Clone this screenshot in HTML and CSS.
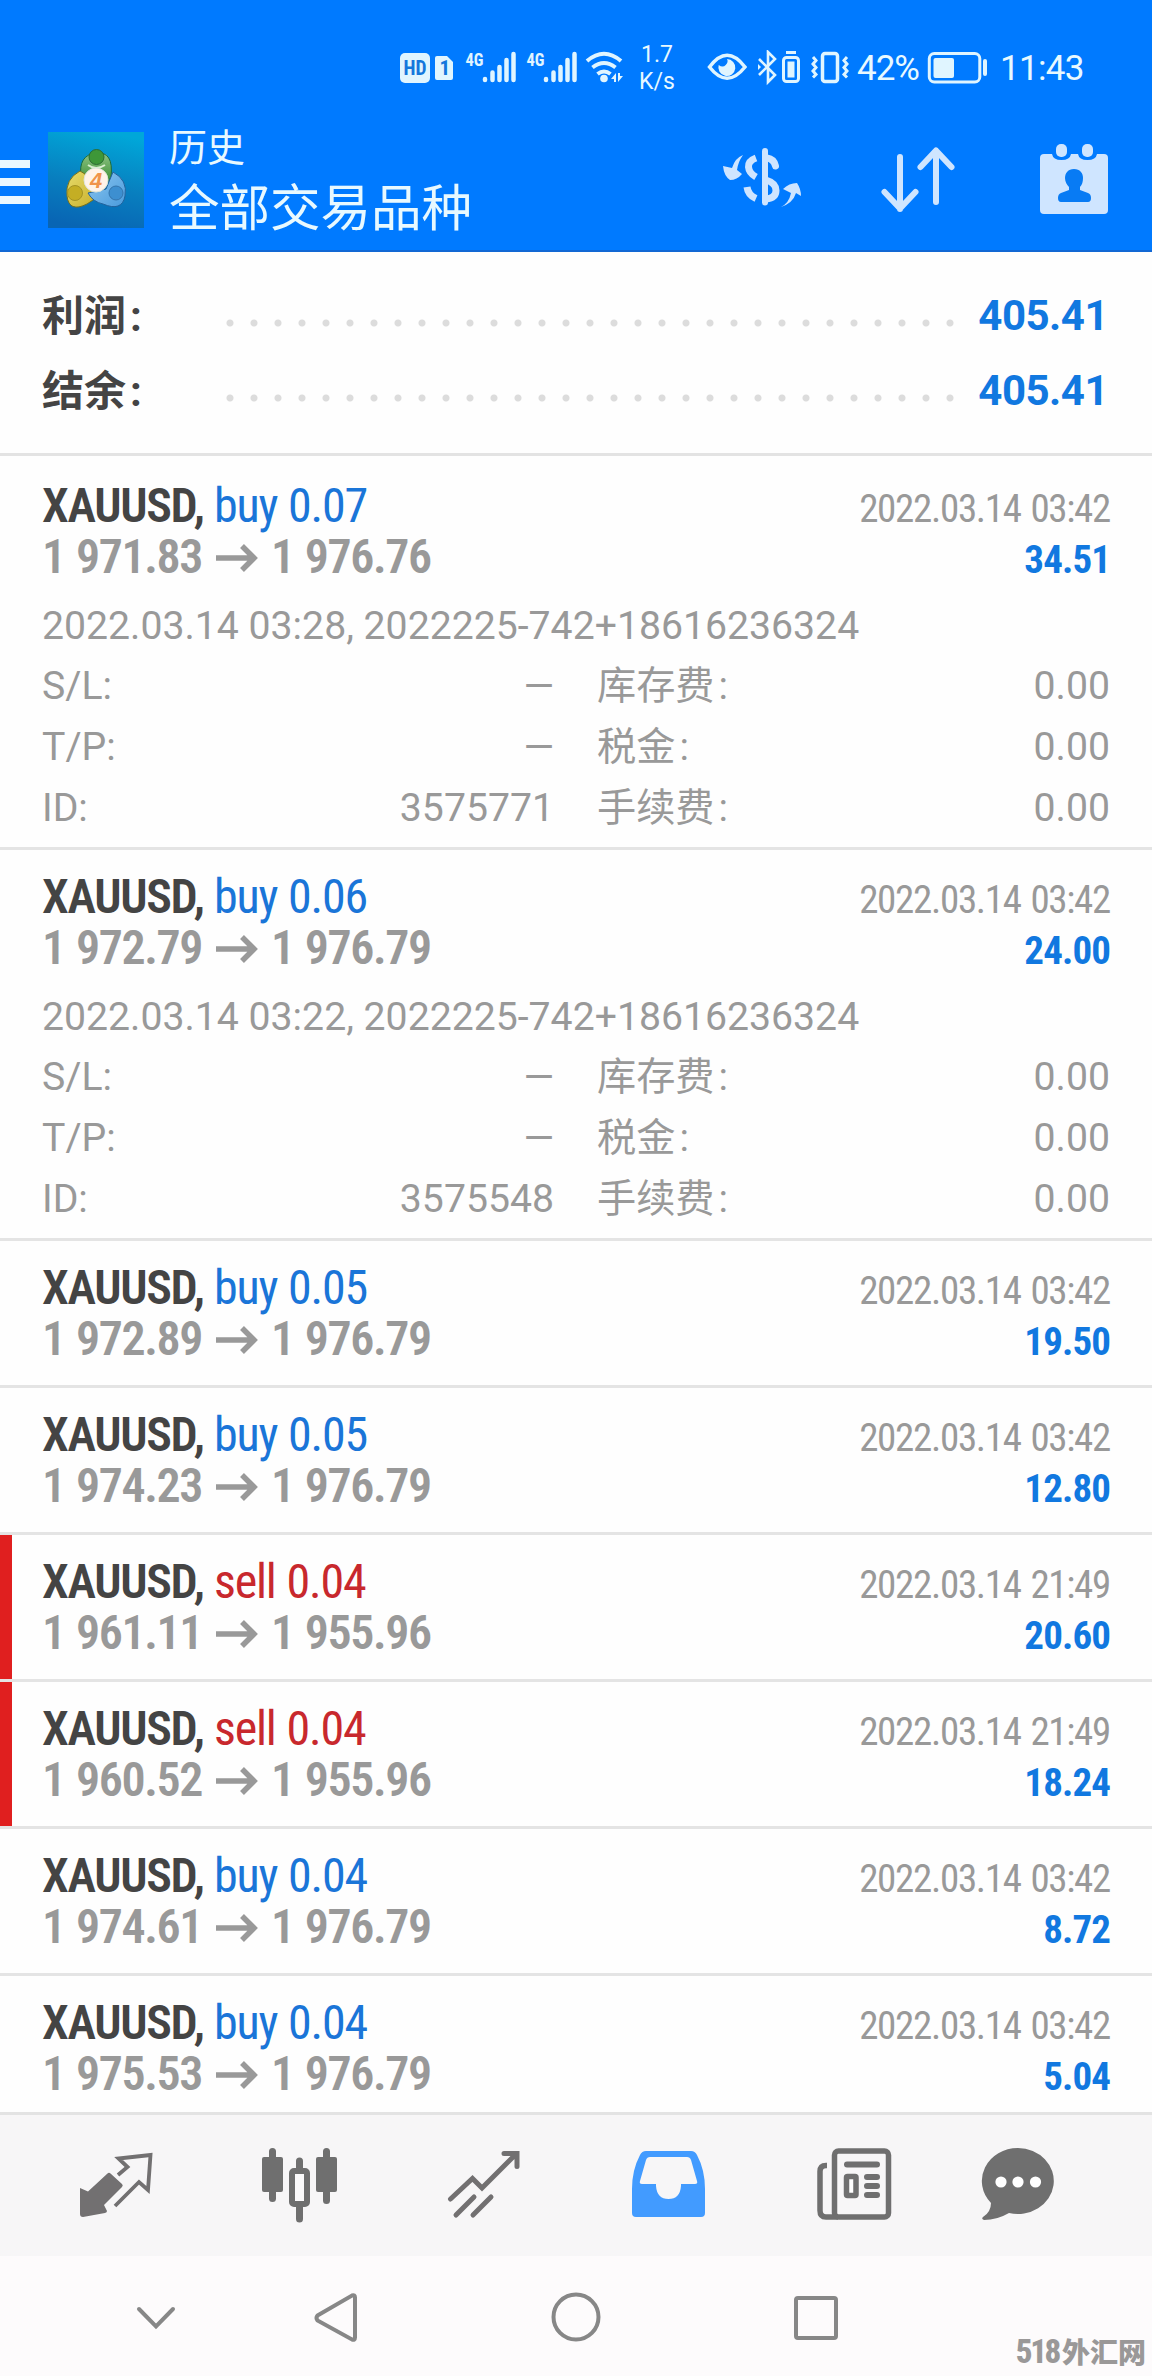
FILE: index.html
```html
<!DOCTYPE html>
<html lang="zh-CN">
<head>
<meta charset="utf-8">
<title>历史</title>
<link rel="stylesheet" href="styles.css">
</head>
<body>
<div class="screen">
  <header class="header">
    <div class="status">
      <svg width="62" height="36" viewBox="398 50 62 36">
        <rect x="400" y="53" width="30" height="30" rx="5" fill="#e0f5ff"/>
        <text x="403.500" y="75" class="svg-hd" textLength="23" lengthAdjust="spacingAndGlyphs">HD</text>
        <path d="M437 56h10l6 6v16q0 2-2 2h-14q-2 0-2-2V58q0-2 2-2z" fill="#e0f5ff"/>
        <text x="439.500" y="75" class="svg-hd">1</text>
      </svg>
      <svg class="signal" width="60" height="46" viewBox="460 40 60 46">
        <text x="465.500" y="66" class="svg-4g" textLength="18" lengthAdjust="spacingAndGlyphs">4G</text>
        <path d="M485 79v1M492.500 72.500v7.500M499.500 67v13M506.500 60v20M513.500 54v26" class="bars"/>
      </svg>
      <svg class="signal" width="60" height="46" viewBox="459 40 60 46">
        <text x="465.500" y="66" class="svg-4g" textLength="18" lengthAdjust="spacingAndGlyphs">4G</text>
        <path d="M485 79v1M492.500 72.500v7.500M499.500 67v13M506.500 60v20M513.500 54v26" class="bars"/>
      </svg>
      <svg width="52" height="36" viewBox="580 50 52 36">
        <g fill="none" stroke="#e0f5ff" stroke-width="4"><path d="M587 61q17-14.500 34 0M592.500 67.500q11.500-9 23 0M597.500 74q6.500-5 13 0"/></g>
        <circle cx="604" cy="78.500" r="3.800" fill="#e0f5ff"/>
        <path d="M611 79l5-6v9h-2v-3zM623 76l-5 6v-9h2v3z" fill="#e0f5ff"/>
      </svg>
      <div class="speed"><span>1.7</span><span>K/s</span></div>
      <svg width="70" height="36" viewBox="682 50 70 36">
        <path d="M709.500 67q17.500-23.500 35.500 0q-18 22.500-35.500 0z" fill="none" stroke="#e0f5ff" stroke-width="3.500"/>
        <path d="M727 59a8.500 8.500 0 1 1-8.300 6q4 3 7 0t1.300-6z" fill="#e0f5ff"/>
      </svg>
      <svg width="54" height="36" viewBox="752 50 54 36">
        <path d="M759 59l16 16-7 7V52l7 7-16 16" fill="none" stroke="#e0f5ff" stroke-width="2.600"/>
        <path d="M758 64l3 3-3 3z" fill="#e0f5ff"/>
        <rect x="783.500" y="57.500" width="15" height="24" rx="3" fill="none" stroke="#e0f5ff" stroke-width="3"/>
        <path d="M786 52.500h10" stroke="#e0f5ff" stroke-width="3"/><path d="M787.500 61.500h7v16h-7z" fill="#e0f5ff"/>
      </svg>
      <svg width="48" height="36" viewBox="806 50 48 36">
        <g fill="none" stroke="#e0f5ff" stroke-width="3.500"><rect x="822.500" y="53.500" width="15" height="28" rx="2.500"/><path d="M813 57l3 3.500-3 3.500 3 3.500-3 3.500 3 3.500-3 3M847 57l-3 3.500 3 3.500-3 3.500 3 3.500-3 3.500 3 3" stroke-width="3"/></g>
      </svg>
      <span class="pct">42%</span>
      <svg width="70" height="36" viewBox="924 50 70 36">
        <rect x="929.300" y="53.500" width="50.500" height="28.500" rx="5" fill="none" stroke="#e0f5ff" stroke-width="3"/>
        <rect x="933.500" y="58" width="20.500" height="20" rx="2" fill="#e0f5ff"/><path d="M985 61v13" stroke="#e0f5ff" stroke-width="4" stroke-linecap="round"/>
      </svg>
      <span class="clock">11:43</span>
    </div>
    <div class="appbar">
      <svg class="burger" width="30" height="44" viewBox="0 0 30 44"><path d="M0 0h30v8H0zM0 18h30v8H0zM0 36h30v8H0z" fill="#eaf8ff"/></svg>
      <svg class="logo" width="96" height="96" viewBox="0 0 96 96">
        <defs>
          <linearGradient id="sky" x1="0.600" y1="0" x2="0.400" y2="1"><stop offset="0" stop-color="#00a7d9"/><stop offset=".55" stop-color="#087fbf"/><stop offset="1" stop-color="#0865b4"/></linearGradient>
          <linearGradient id="green" x1="0" y1="0" x2="0" y2="1"><stop offset="0" stop-color="#8fc486"/><stop offset="1" stop-color="#398d31"/></linearGradient>
          <linearGradient id="gold" x1="0" y1="0" x2="1" y2="1"><stop offset="0" stop-color="#e6dc6c"/><stop offset="1" stop-color="#c9ae28"/></linearGradient>
          <linearGradient id="blue" x1="0" y1="0" x2="1" y2="1"><stop offset="0" stop-color="#8cc6f0"/><stop offset="1" stop-color="#4a9bdc"/></linearGradient>
        </defs>
        <rect width="96" height="96" fill="url(#sky)"/>
        <path d="M33 45q-3-22 15-24t15 24l-4 6H37z" fill="url(#green)" stroke="#1b6b3c"/>
        <path d="M32 39q-15 8-13 25t20 8l12-8-14-22z" fill="url(#gold)" stroke="#77711c"/>
        <path d="M65 40q15 8 12 24t-22 8q-10-2-15-11l18-4z" fill="url(#blue)" stroke="#22629c"/>
        <circle cx="48.500" cy="25" r="7.500" fill="#3e9738" stroke="#2b6c32"/><circle cx="27" cy="61" r="7.500" fill="#c4ae24" stroke="#a49323"/><circle cx="68" cy="61" r="7" fill="#3d8fd0" stroke="#3475ad"/>
        <path d="M40 33q8 6 17 0" stroke="#d8efd0" stroke-width="2" fill="none"/>
        <circle cx="48" cy="48" r="12" fill="#fff3e8" stroke="#dce4da"/>
        <text x="42" y="56" class="svg-four">4</text>
      </svg>
      <div class="titles"><div class="sub">历史</div><div class="main">全部交易品种</div></div>
      <div class="actions">
        <svg width="80" height="64" viewBox="722 146 80 64">
          <g fill="none" stroke="#cfe5ff" stroke-width="7"><path d="M756 158q-8 3-7.500 9t7.500 10M747 187q1 8 9 11.500"/><path d="M765 151v51.500" stroke-width="6" stroke-linecap="round"/><path d="M767 158q7 1 8.500 8" stroke-linecap="round"/><path d="M766 180q10 3 10 10.500t-10 8.500"/></g>
          <path d="M743 155q-8 3-11 13l-9-2q1 10 7 14 7 0 12-6l-5-4q1-8 6-15zM781 207q8-4 10-14l-8-4q6-6 14-6 4 6 4 13l-5-3q-3 10-15 14z" fill="#cfe5ff"/>
        </svg>
        <svg width="76" height="68" viewBox="880 146 76 68"><path d="M900 157v52M884.500 192l15.500 16.500 15.500-16.500M936 202v-51M920.500 167l15.500-16.500 15.500 16.500" fill="none" stroke="#cfe5ff" stroke-width="6" stroke-linecap="round" stroke-linejoin="round"/></svg>
        <svg width="68" height="72" viewBox="1040 143 68 72">
          <path d="M1044 154h60q4 0 4 4v52q0 4-4 4h-60q-4 0-4-4v-52q0-4 4-4z" fill="#cfe5ff"/>
          <path d="M1052 150v4q1 6 9.500 6t9.500-6v-4zM1078 150v4q1 6 9.500 6t9.500-6v-4z" fill="#007aff"/>
          <rect x="1056" y="144" width="11" height="13" rx="5" fill="#cfe5ff"/><rect x="1082" y="144" width="11" height="13" rx="5" fill="#cfe5ff"/>
          <path d="M1074 169c6 0 9 4 9 9 0 4-1 7-3 9v3l8 3q3 1 3 5t-3 4h-27q-3 0-3-4t3-5l8-3v-3c-2-2-4-5-4-9 0-5 3-9 9-9z" fill="#087bf4"/>
        </svg>
      </div>
    </div>
  </header>

  <section class="summary">
    <div class="sum-row"><span class="sum-label">利润<span class="colon">:</span></span><i class="dots"></i><b class="sum-val">405.41</b></div>
    <div class="sum-row"><span class="sum-label">结余<span class="colon">:</span></span><i class="dots"></i><b class="sum-val">405.41</b></div>
  </section>

  <main class="list">
    <article class="deal">
      <div class="row"><span class="name">XAUUSD,</span><span class="side">buy 0.07</span><span class="date">2022.03.14 03:42</span></div>
      <div class="row row2"><span class="price">1 971.83</span><svg class="arrow" viewBox="0 0 42 30"><path d="M0 15h37M26 3l12 12-12 12"/></svg><span class="price">1 976.76</span><b class="value">34.51</b></div>
      <div class="details">
        <span class="note">2022.03.14 03:28, 2022225-742+18616236324</span>
        <span>S/L:</span><span class="num">—</span><span class="fee">库存费<span class="colon">:</span></span><span class="num">0.00</span>
        <span>T/P:</span><span class="num">—</span><span class="fee">税金<span class="colon">:</span></span><span class="num">0.00</span>
        <span>ID:</span><span class="num">3575771</span><span class="fee">手续费<span class="colon">:</span></span><span class="num">0.00</span>
      </div>
    </article>
    <article class="deal">
      <div class="row"><span class="name">XAUUSD,</span><span class="side">buy 0.06</span><span class="date">2022.03.14 03:42</span></div>
      <div class="row row2"><span class="price">1 972.79</span><svg class="arrow" viewBox="0 0 42 30"><path d="M0 15h37M26 3l12 12-12 12"/></svg><span class="price">1 976.79</span><b class="value">24.00</b></div>
      <div class="details">
        <span class="note">2022.03.14 03:22, 2022225-742+18616236324</span>
        <span>S/L:</span><span class="num">—</span><span class="fee">库存费<span class="colon">:</span></span><span class="num">0.00</span>
        <span>T/P:</span><span class="num">—</span><span class="fee">税金<span class="colon">:</span></span><span class="num">0.00</span>
        <span>ID:</span><span class="num">3575548</span><span class="fee">手续费<span class="colon">:</span></span><span class="num">0.00</span>
      </div>
    </article>
    <article class="deal">
      <div class="row"><span class="name">XAUUSD,</span><span class="side">buy 0.05</span><span class="date">2022.03.14 03:42</span></div>
      <div class="row row2"><span class="price">1 972.89</span><svg class="arrow" viewBox="0 0 42 30"><path d="M0 15h37M26 3l12 12-12 12"/></svg><span class="price">1 976.79</span><b class="value">19.50</b></div>
    </article>
    <article class="deal">
      <div class="row"><span class="name">XAUUSD,</span><span class="side">buy 0.05</span><span class="date">2022.03.14 03:42</span></div>
      <div class="row row2"><span class="price">1 974.23</span><svg class="arrow" viewBox="0 0 42 30"><path d="M0 15h37M26 3l12 12-12 12"/></svg><span class="price">1 976.79</span><b class="value">12.80</b></div>
    </article>
    <article class="deal flagged">
      <div class="row"><span class="name">XAUUSD,</span><span class="side sell">sell 0.04</span><span class="date">2022.03.14 21:49</span></div>
      <div class="row row2"><span class="price">1 961.11</span><svg class="arrow" viewBox="0 0 42 30"><path d="M0 15h37M26 3l12 12-12 12"/></svg><span class="price">1 955.96</span><b class="value">20.60</b></div>
    </article>
    <article class="deal flagged">
      <div class="row"><span class="name">XAUUSD,</span><span class="side sell">sell 0.04</span><span class="date">2022.03.14 21:49</span></div>
      <div class="row row2"><span class="price">1 960.52</span><svg class="arrow" viewBox="0 0 42 30"><path d="M0 15h37M26 3l12 12-12 12"/></svg><span class="price">1 955.96</span><b class="value">18.24</b></div>
    </article>
    <article class="deal">
      <div class="row"><span class="name">XAUUSD,</span><span class="side">buy 0.04</span><span class="date">2022.03.14 03:42</span></div>
      <div class="row row2"><span class="price">1 974.61</span><svg class="arrow" viewBox="0 0 42 30"><path d="M0 15h37M26 3l12 12-12 12"/></svg><span class="price">1 976.79</span><b class="value">8.72</b></div>
    </article>
    <article class="deal">
      <div class="row"><span class="name">XAUUSD,</span><span class="side">buy 0.04</span><span class="date">2022.03.14 03:42</span></div>
      <div class="row row2"><span class="price">1 975.53</span><svg class="arrow" viewBox="0 0 42 30"><path d="M0 15h37M26 3l12 12-12 12"/></svg><span class="price">1 976.79</span><b class="value">5.04</b></div>
    </article>
  </main>

  <nav class="tabs">
    <svg width="76" height="80" viewBox="78 2146 76 80">
      <path d="M80 2188l8 3.500 19.500-18q1.500-1.500 3 0L122 2184q1.500 1.500 0 3l-18 18 3 6q0 1.500-2 2l-22 4q-3 0-3-3z" fill="#727071"/>
      <path d="M115 2206l24-24 9 8 2.500-35-32 3.500 9 8.500-9.500 8" fill="none" stroke="#727071" stroke-width="3.800"/>
    </svg>
    <svg width="78" height="80" viewBox="261 2146 78 80">
      <path d="M272.500 2151.500v47M299.500 2161v58M326.500 2151.500v49" stroke="#6f6f6f" stroke-width="7" stroke-linecap="round"/>
      <rect x="262" y="2157" width="21" height="35" rx="2" fill="#6f6f6f"/><rect x="316" y="2157" width="21" height="35" rx="2" fill="#6f6f6f"/><rect x="292" y="2171" width="15" height="33" rx="2" fill="#fbfafb" stroke="#6f6f6f" stroke-width="6"/>
    </svg>
    <svg width="76" height="80" viewBox="446 2146 76 80">
      <g fill="none" stroke="#727071" stroke-width="5" stroke-linecap="round"><path d="M450.500 2199l22-20.500 9.500 9.500 34-34M504 2153.500h13v13"/><path d="M456 2215l18-18M473 2215l18-18"/></g>
    </svg>
    <svg width="76" height="80" viewBox="630 2146 76 80">
      <path fill-rule="evenodd" d="M646 2151h45q4 0 6 4q8 15 8 34v24q0 4-4 4h-65q-4 0-4-4v-24q0-19 8-34q2-4 6-4zM650 2157q-3 0-4 3l-6 21q-1 3 2 3h14v2q1 13 12.500 13t12.500-13v-2h14q3 0 2-3l-6-21q-1-3-4-3z" fill="#429bff"/>
    </svg>
    <svg width="80" height="80" viewBox="814 2146 80 80">
      <g fill="none" stroke="#6f6f6f" stroke-width="5.500"><rect x="834.500" y="2151" width="54" height="66" rx="4"/><path d="M827 2165.500h-1q-6 0-6 6v39q0 6.500 6 6.500h12"/></g>
      <path d="M847 2164.500h30M867 2177h10M867 2186h10M867 2195h10" stroke="#6f6f6f" stroke-width="6" stroke-linecap="round"/><rect x="846.500" y="2176.500" width="9.500" height="19" rx="1" fill="#fff" stroke="#6f6f6f" stroke-width="5.500"/>
    </svg>
    <svg width="76" height="80" viewBox="980 2146 76 80">
      <path d="M1018 2148a36 33 0 1 1-9 65q-12 7-25 7q-3-1-1-3q8-5 8-14a36 33 0 0 1 27-55z" fill="#6f6f6f"/><g fill="#fff"><circle cx="1001" cy="2182" r="5.600"/><circle cx="1018" cy="2182" r="5.600"/><circle cx="1035.500" cy="2182" r="5.600"/></g>
    </svg>
  </nav>

  <footer class="sysnav">
    <svg width="44" height="56" viewBox="134 2289 44 56"><path d="M139 2309l17 17.500 17-17.500"/></svg>
    <svg width="48" height="56" viewBox="312 2289 48 56"><path d="M317.500 2315.500L352 2295.500q3-1 3 2v40q0 3-3 2L317.500 2320.500q-2-2.500 0-5z"/></svg>
    <svg width="56" height="56" viewBox="548 2289 56 56"><circle cx="576" cy="2317" r="22.500"/></svg>
    <svg width="48" height="56" viewBox="792 2289 48 56"><rect x="796" y="2298" width="40" height="40" rx="2"/></svg>
    <div class="mark"><span>518</span>外汇网</div>
  </footer>
</div>
</body>
</html>
```
FILE: styles.css
```css
* { box-sizing: border-box; }
body { margin: 0; background: #fefefe; font-family: Roboto, "Noto Sans CJK SC", sans-serif; }
svg { display: block; flex: none; }
.screen { width: 1152px; height: 2376px; display: flex; flex-direction: column; position: relative; overflow: hidden; }

.header { height: 252px; flex: none; background: #007aff; border-bottom: 2px solid #1268d4; color: #e8f9ff; }
.status { height: 112px; padding: 50px 0 0 398px; display: flex; align-items: flex-start; }
.signal { margin-top: -10px; }
.svg-hd { font: 700 21px Roboto; font-stretch: 75%; fill: #1377dc; }
.svg-4g { font: 700 19px Roboto; font-stretch: 75%; fill: #e0f5ff; }
.svg-four { font: italic 700 22px "Liberation Sans"; fill: #f0944a; }
.bars { fill: none; stroke: #e0f5ff; stroke-width: 4.500; stroke-linecap: round; }
.speed { width: 50px; margin-top: -9px; display: flex; flex-direction: column; align-items: center; font-size: 23px; line-height: 27px; }
.pct, .clock { font-size: 35px; line-height: 38px; white-space: nowrap; }
.pct { width: 70px; padding-left: 3px; letter-spacing: -1px; }
.clock { padding-left: 6px; letter-spacing: -.7px; }

.appbar { display: flex; align-items: flex-start; padding-right: 44px; }
.burger { margin-top: 48px; }
.logo { margin: 20px 25px 0 18px; }
.titles { margin-top: 13px; white-space: nowrap; }
.sub { font-size: 38px; line-height: 46px; }
.main { font-size: 50.500px; line-height: 76px; }
.actions { margin: 31px 0 0 auto; display: flex; align-items: flex-start; }
.actions svg:nth-child(1) { margin-top: 3px; }
.actions svg:nth-child(2) { margin: 3px 84px 0 78px; }

.summary { flex: none; height: 204px; padding-top: 26px; border-bottom: 3px solid #e3e3e3; }
.sum-row { height: 75px; line-height: 75px; display: grid; grid-template-columns: 218px 744px 1fr; padding-right: 46px; font-size: 42px; }
.sum-label { padding: 1px 0 0 42px; font-weight: 700; color: #444; }
.colon { margin-left: 4px; }
.dots { height: 8px; margin-top: 41px; background: radial-gradient(circle at center, #dcdcdc 3px, transparent 4px) 0 0 / 24px 8px repeat-x; }
.sum-val { text-align: right; color: #1178e0; font-weight: 700; letter-spacing: -.5px; margin-right: -2px; }

.list { flex: 1; min-height: 0; overflow: hidden; padding-top: 3px; }
.deal { padding: 21px 42px 21px; border-bottom: 3px solid #e4e4e4; }
.flagged { box-shadow: inset 12px 0 #e01f1f; }
.row { display: flex; align-items: baseline; height: 52px; line-height: 52px; font-size: 48px; font-stretch: 75%; white-space: nowrap; }
.row2 { height: 50px; line-height: 50px; }
.name { font-weight: 600; color: #444; letter-spacing: -1.300px; width: 172px; }
.side { color: #1a75d8; letter-spacing: -1.200px; word-spacing: 1px; }
.side.sell { color: #c8282d; }
.date { margin-left: auto; font-size: 39px; color: #999; letter-spacing: -1.300px; word-spacing: 2px; }
.price { color: #999; font-weight: 600; letter-spacing: -1.400px; word-spacing: 1.500px; }
.arrow { width: 42px; height: 30px; margin: 0 13px 0 14px; align-self: center; fill: none; stroke: #999; stroke-width: 5.500; transform: translateY(1px); }
.value { margin-left: auto; font-size: 39px; font-weight: 700; color: #1178e0; letter-spacing: -.9px; }
.details { margin-top: 13.800px; margin-bottom: -12.600px; display: grid; grid-template-columns: 180px 332px 1fr 1fr; grid-auto-rows: 60.700px; font-size: 39.200px; line-height: 61.200px; color: #999; white-space: nowrap; }
.note { grid-column: 1 / -1; }
.num { text-align: right; }
.fee { padding-left: 43px; }

.tabs { flex: none; height: 144px; border-top: 3px solid #e3e3e3; background: #f7f6f7; padding: 31px 0 0 78px; display: flex; }
.tabs svg:nth-child(2) { margin-left: 107px; }
.tabs svg:nth-child(3) { margin-left: 107px; }
.tabs svg:nth-child(4) { margin-left: 108px; }
.tabs svg:nth-child(5) { margin-left: 108px; }
.tabs svg:nth-child(6) { margin-left: 86px; }
.sysnav { flex: none; height: 120px; background: #fdfbfc; padding: 33px 0 0 134px; display: flex; }
.sysnav svg { fill: none; stroke: #878787; stroke-width: 4; stroke-linecap: round; }
.sysnav svg:nth-child(2) { margin-left: 134px; }
.sysnav svg:nth-child(3) { margin-left: 188px; }
.sysnav svg:nth-child(4) { margin-left: 188px; }
.mark { position: absolute; right: 6px; bottom: 4px; font: 900 28px/40px "Noto Sans CJK SC", sans-serif; color: #9a9898; white-space: nowrap; }
.mark span { font: 800 33px/40px Roboto; font-stretch: 75%; letter-spacing: -2.400px; margin-right: 3px; }
```
